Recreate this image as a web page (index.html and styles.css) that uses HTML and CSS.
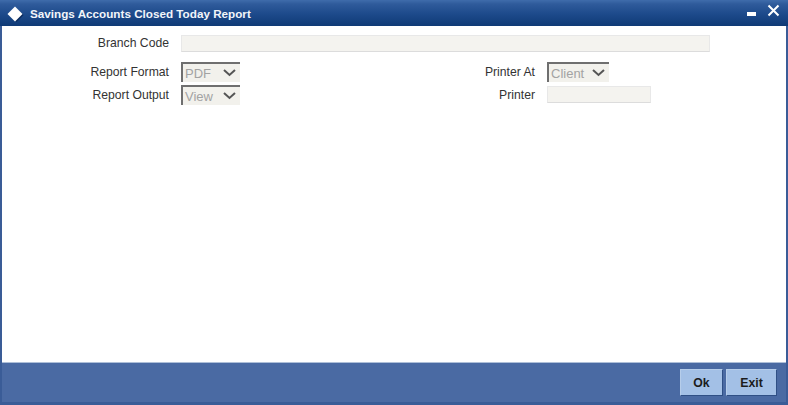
FILE: index.html
```html
<!DOCTYPE html>
<html lang="en">
<head>
<meta charset="utf-8">
<title>Savings Accounts Closed Today Report</title>
<link rel="stylesheet" href="styles.css">
</head>
<body>
<div class="window">
  <header class="titlebar">
    <svg class="logo" width="18" height="18" viewBox="0 0 18 18"><path d="M9 3l7.500 7-7 7-1-1z" fill="#0b2a5c"/><path d="M8 1.500l7.500 7.500-7.500 7.500-7.500-7.500z" fill="#fff"/></svg>
    <h1 class="title">Savings Accounts Closed Today Report</h1>
    <div class="controls">
      <span class="minimize"></span>
      <svg class="close" width="13" height="13" viewBox="0 0 13 13"><path d="M1.500 1.500l10 10M11.500 1.500l-10 10" stroke="#fff" stroke-width="2" fill="none"/></svg>
    </div>
  </header>
  <main class="content">
    <div class="row-branch">
      <span class="label">Branch Code</span>
      <div class="input input-wide"></div>
    </div>
    <div class="columns">
      <div class="col">
        <div class="row">
          <span class="label">Report Format</span>
          <div class="select"><span>PDF</span><svg class="chev" width="13" height="8" viewBox="0 0 13 8"><path d="M1 1l5.500 5 5.500-5" stroke="#555" stroke-width="2" fill="none"/></svg></div>
        </div>
        <div class="row">
          <span class="label">Report Output</span>
          <div class="select"><span>View</span><svg class="chev" width="13" height="8" viewBox="0 0 13 8"><path d="M1 1l5.500 5 5.500-5" stroke="#555" stroke-width="2" fill="none"/></svg></div>
        </div>
      </div>
      <div class="col col-right">
        <div class="row">
          <span class="label label-right">Printer At</span>
          <div class="select select-client"><span>Client</span><svg class="chev" width="13" height="8" viewBox="0 0 13 8"><path d="M1 1l5.500 5 5.500-5" stroke="#555" stroke-width="2" fill="none"/></svg></div>
        </div>
        <div class="row">
          <span class="label label-right">Printer</span>
          <div class="input input-printer"></div>
        </div>
      </div>
    </div>
  </main>
  <footer class="footer">
    <button class="btn" type="button">Ok</button>
    <button class="btn btn-exit" type="button">Exit</button>
  </footer>
</div>
</body>
</html>
```
FILE: styles.css
```css
html, body {
  margin: 0;
  padding: 0;
}
body {
  width: 788px;
  height: 405px;
  overflow: hidden;
  font-family: "Liberation Sans", Arial, sans-serif;
  font-size: 12.2px;
  color: #333;
}
.window {
  box-sizing: border-box;
  width: 788px;
  height: 405px;
  display: flex;
  flex-direction: column;
  background: #fff;
  border-left: 2px solid #3a5c97;
  border-right: 2px solid #3a5c97;
  border-bottom: 3px solid #3a5c97;
}
.titlebar {
  height: 26px;
  flex: none;
  margin: 0 -2px;
  padding-left: 7px;
  display: flex;
  align-items: center;
  background: linear-gradient(#3f6cab 0, #2f5b9b 4px, #1d4a8b 14px, #0f3a76 26px);
  color: #fff;
}
.logo {
  flex: none;
  margin-top: 1px;
}
.title {
  margin: 1px 0 0 5px;
  font-size: 11.7px;
  font-weight: bold;
  color: #f2f5fa;
}
.controls {
  margin-left: auto;
  display: flex;
  align-items: flex-start;
  height: 26px;
}
.minimize {
  width: 9px;
  height: 4px;
  margin-top: 12px;
  background: #fff;
}
.close {
  margin: 4px 8px 0 11px;
}
.content {
  flex: 1;
  min-height: 0;
}
.row-branch {
  display: flex;
  align-items: center;
  height: 17px;
  margin-top: 9px;
}
.label {
  flex: none;
  box-sizing: border-box;
  width: 167px;
  text-align: right;
  line-height: 17px;
}
.input {
  flex: none;
  box-sizing: border-box;
  height: 17px;
  margin-left: 12px;
  background: #f4f3ef;
  border: 1px solid #e8e8e8;
  border-bottom-color: #dcdcdc;
}
.input-wide {
  width: 529px;
}
.input-printer {
  width: 104px;
  align-self: flex-start;
  margin-top: 1px;
}
.columns {
  display: flex;
  margin-top: 10px;
}
.col {
  width: 364px;
  flex: none;
}
.col-right {
  width: 400px;
}
.row {
  display: flex;
  align-items: center;
  height: 20px;
  margin-bottom: 3px;
}
.row:last-child {
  margin-bottom: 0;
}
.label-right {
  width: 169px;
}
.select {
  flex: none;
  box-sizing: border-box;
  width: 59px;
  height: 20px;
  margin-left: 12px;
  padding: 0 4px 0 2px;
  display: flex;
  align-items: center;
  justify-content: space-between;
  background: #f2f1ec;
  border-top: 2px solid #6f6f6f;
  border-left: 2px solid #6f6f6f;
  font-size: 13px;
  color: #a3a3a3;
}
.select-client {
  width: 62px;
}
.chev {
  flex: none;
}
.footer {
  flex: none;
  height: 40px;
  box-sizing: border-box;
  background: #4a6aa3;
  border-top: 1px solid #aebfd8;
  display: flex;
  justify-content: flex-end;
  align-items: flex-start;
  gap: 3px;
  padding: 6px 9px 0 0;
}
.btn {
  width: 43px;
  height: 27px;
  padding: 0;
  font-family: inherit;
  font-size: 12.3px;
  font-weight: bold;
  color: #1c1c1c;
  background: #a3c0e6;
  border: 1px solid #b6cdea;
  border-right-color: #2f4f85;
  border-bottom-color: #2f4f85;
}
.btn-exit {
  width: 51px;
}
```
